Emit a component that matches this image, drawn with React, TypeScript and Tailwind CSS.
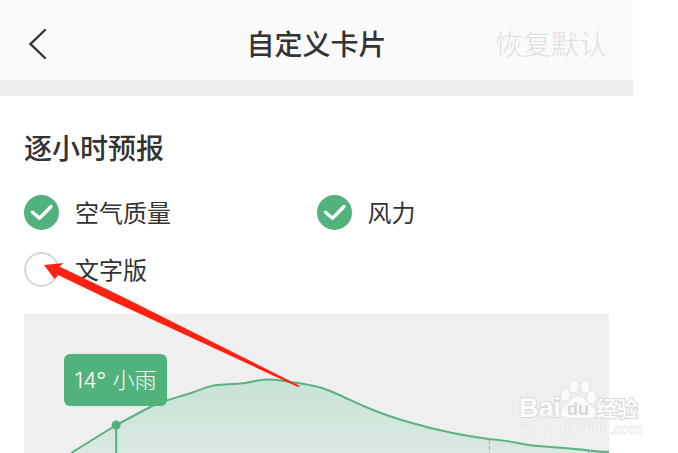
import React, { useState } from "react";

const OPTIONS = [
  { id: "air", label: "空气质量" },
  { id: "wind", label: "风力" },
  { id: "text", label: "文字版" },
];

interface OptionProps {
  id: string;
  label: string;
  checked: boolean;
  onChange: () => void;
}

function Option({ id, label, checked, onChange }: OptionProps) {
  return (
    <label htmlFor={id} className="flex items-center gap-4 text-2xl leading-9 cursor-pointer">
      <span className="grid size-[35px] shrink-0">
        <input
          id={id}
          type="checkbox"
          checked={checked}
          onChange={onChange}
          className="col-start-1 row-start-1 appearance-none size-full rounded-full border-2 border-[#d6d6d6] bg-white checked:border-[#52b27c] checked:bg-[#52b27c]"
        />
        {checked && (
          <svg viewBox="0 0 35 35" className="col-start-1 row-start-1 size-full pointer-events-none" fill="none">
            <path d="M8.5 17.2L15.5 23.3L27 11.5" stroke="white" strokeWidth="3.4" strokeLinecap="round" strokeLinejoin="round" />
          </svg>
        )}
      </span>
      <span className="pt-1">{label}</span>
    </label>
  );
}

const CURVE =
  "M47 139L92 111C104 105 116 98 128 92C138 87 155 83 168 78.500C178 75 184 72 193 71C202 70 209 70 216 69.500C226 68.500 231 66 243 65.500C254 65 262 68 274 69C280 70 286 71 292 72.500C302 75 308 78 316 81.500C326 86 336 91 346 95C358 100 370 104 382 107.500C397 112 413 116 428 119C440 121.500 452 123.500 464 125C475 126 484 127 493 129C502 131 511 132 520 132.500C532 133.500 544 134.500 556 135.500C566 137 575 138 584 138";

function HourlyChart() {
  return (
    <div className="relative h-[139px] overflow-hidden bg-[#efefef]">
      <svg viewBox="0 0 584 139" preserveAspectRatio="none" className="block size-full" fill="none">
        <defs>
          <linearGradient id="area" x1="0" y1="0" x2="0" y2="1">
            <stop offset="0" stopColor="#c7e3d5" />
            <stop offset="1" stopColor="#dae8e1" />
          </linearGradient>
        </defs>
        <path d={CURVE + "V139H47Z"} fill="url(#area)" />
        <path d={CURVE} stroke="#57b382" strokeWidth="2" />
        <path d="M92 111V139" stroke="#52b27c" strokeWidth="2" />
        <path d="M464.500 126V139M563.500 137V139" stroke="#7fc3a0" strokeDasharray="4 2" />
        <circle cx="92" cy="111" r="4.500" fill="#52b27c" />
      </svg>
      <div className="absolute top-10 left-10 flex h-[52px] w-[103px] items-center justify-center rounded-md bg-[#52b27c] font-['Inter','Noto_Sans_CJK_SC',sans-serif] text-[22px] font-light text-white whitespace-pre">
        14° 小雨
      </div>
    </div>
  );
}

function Watermark() {
  return (
    <svg viewBox="0 0 128 64" className="absolute top-[376px] left-[516px] w-32 h-16" fill="#fbfbfb" stroke="#d8d8d8" strokeLinejoin="round">
      <g fontFamily="Liberation Sans, Noto Sans CJK SC, sans-serif" fontWeight="700" paintOrder="stroke">
        <text x="3" y="41" fontSize="27" strokeWidth="2">Bai</text>
        <path d="M62.500 20C57 20 56 24 52 28C48 31 44 34 45 38C46 43 54 42 62.500 42C71 42 79 43 80 38C81 34 77 31 73 28C69 24 68 20 62.500 20Z" />
        <ellipse cx="49.500" cy="19" rx="4.500" ry="6" />
        <ellipse cx="58" cy="10.500" rx="4.500" ry="6" />
        <ellipse cx="69" cy="11" rx="4.500" ry="6" />
        <ellipse cx="75.500" cy="21.500" rx="4.500" ry="6" />
        <text x="62" y="39" fontSize="18" textAnchor="middle" fill="#d6d6d6" stroke="none">du</text>
        <text x="80" y="40" fontSize="21" strokeWidth="2">经验</text>
      </g>
      <text x="5" y="58" fontSize="15" fontFamily="Liberation Sans, sans-serif" strokeWidth="1" paintOrder="stroke" stroke="#e0e0e0">jingyan.baidu.com</text>
    </svg>
  );
}

export default function App() {
  const [selected, setSelected] = useState<string[]>(["air", "wind"]);

  const toggle = (id: string) => {
    setSelected(selected.includes(id) ? selected.filter((s) => s !== id) : [...selected, id]);
  };

  return (
    <div className="relative bg-white pr-[45px] font-['Roboto','Noto_Sans_CJK_SC',sans-serif] text-[#333]">
      {/* Header */}
      <header className="grid h-20 grid-cols-[1fr_auto_1fr] items-center bg-[#fafafa] px-[26px] pt-3 text-[28px]">
        <button aria-label="返回" className="w-8 pb-1">
          <svg viewBox="0 0 32 32" className="size-8" fill="none" stroke="#333" strokeWidth="2.400" strokeLinecap="round">
            <path d="M19 2L4.500 16L19 30" />
          </svg>
        </button>
        <h1 className="font-medium">自定义卡片</h1>
        <button disabled className="justify-self-end font-light text-[#dfdfdf]">恢复默认</button>
      </header>
      <div className="h-4 bg-[#eeeeee]" />

      <main className="px-6 pt-[34px]">
        <h2 className="text-[28px] leading-10 font-medium">逐小时预报</h2>
        <div className="mt-[22px] mb-[25px] grid grid-cols-2 gap-y-[17px]">
          {OPTIONS.map((o) => (
            <Option key={o.id} {...o} checked={selected.includes(o.id)} onChange={() => toggle(o.id)} />
          ))}
        </div>
        <HourlyChart />
      </main>

      {/* Pointer arrow */}
      <svg viewBox="0 0 256 124" className="absolute top-[263px] left-11 w-64 h-[124px] pointer-events-none">
        <path d="M0 2L19.500 0L15.500 3.500L85 37L256 123L254 124L66 37L14 12L10.500 16Z" fill="#ff2213" />
      </svg>

      <Watermark />
    </div>
  );
}
